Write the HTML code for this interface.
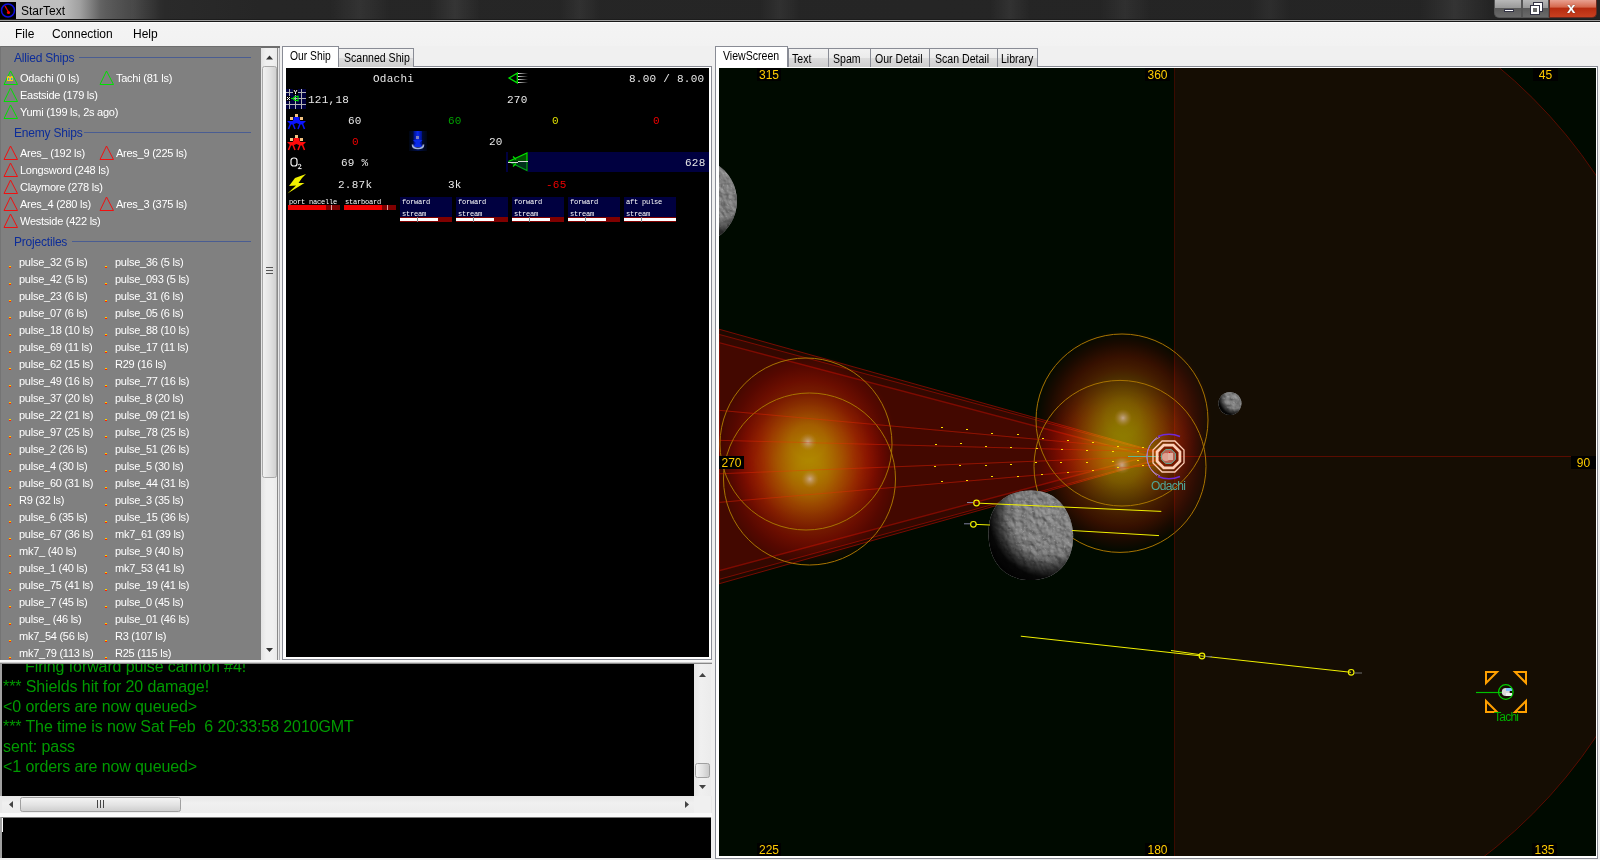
<!DOCTYPE html><html><head><meta charset="utf-8"><style>
*{box-sizing:border-box;margin:0;padding:0}
html,body{width:1600px;height:860px;overflow:hidden;background:#f0f0f0;font-family:"Liberation Sans",sans-serif;position:relative}
.a{position:absolute}
.mono{font-family:"Liberation Mono",monospace}
#title{left:0;top:0;width:1600px;height:22px;background:linear-gradient(#242424,#242424 19px,#1c1c1c 19px,#1c1c1c 20px,#a0a0a0 20px,#a0a0a0 21px,#181818 21px);overflow:hidden}
#menu{left:0;top:22px;width:1600px;height:24px;background:linear-gradient(#fdfdfd 0,#fdfdfd 1px,#f4f4f4 1px,#f2f2f2 100%);font-size:12px;color:#000}
#menu span{position:absolute;top:5px}
#list{left:0;top:46px;width:261px;height:614px;background:#808080;overflow:hidden;font-size:11px;color:#fff;letter-spacing:-0.25px}
.hd{position:absolute;color:#0c2c98;font-size:12px;letter-spacing:-0.2px;line-height:14px}
.hl{position:absolute;height:1px;background:#4a5d92}
.it{position:absolute;white-space:nowrap;line-height:13px}
.tri{position:absolute}
.pd{position:absolute;width:2px;height:2px;background:#ff2000;border-top:1px solid #ffd000}
.sb{position:absolute;background:#eaeaea}
.tab{position:absolute;font-size:12px;color:#000;white-space:nowrap;line-height:14px}
.tabu{background:linear-gradient(#f2f2f2,#ebebeb 50%,#dcdcdc 51%,#cfcfcf);border:1px solid #898c95;border-bottom:none}
.tabs{background:#fff;border:1px solid #898c95;border-bottom:none}
.ost{position:absolute;font-family:"Liberation Mono",monospace;font-size:11px;color:#e8e8e8;white-space:pre;line-height:12px}
.z{font-family:"Liberation Sans",sans-serif;font-size:12px;display:inline-block;width:6.85px;text-align:center;letter-spacing:0}
.wl{position:absolute;font-family:"Liberation Mono",monospace;font-size:7px;color:#fff;white-space:pre;line-height:7px;letter-spacing:-0.2px}
#log{left:0;top:664px;width:694px;height:132px;background:#000;border-left:2px solid #a0a0a0;overflow:hidden;color:#009a00;font-size:16px}
#hs{left:0;top:796px;width:712px;height:17px;background:#eaeaea}
#inp{left:0;top:816px;width:711px;height:42px;background:#000;border-left:2px solid #a0a0a0;border-top:2px solid #7a7a7a}
#log div{position:absolute;left:1px;white-space:pre;line-height:20px;letter-spacing:-0.1px}
.lbl{position:absolute;background:#000;color:#ffcc00;font-size:12px;line-height:14px;height:13px;text-align:center;padding-top:0;overflow:hidden}
</style></head><body>
<div id="title" class="a">
<div class="a" style="left:0;top:0;width:1600px;height:19px;background:linear-gradient(90deg,#c0c0c0 0,#bebebe 62px,#a0a0a0 80px,#646464 100px,#3c3c3c 130px,#2a2a2a 165px,#262626 260px,#242424 100%)"></div>
<div class="a" style="left:0;top:0;width:1600px;height:19px;background:linear-gradient(90deg,transparent 0,transparent 105px,rgba(255,255,255,0.08) 132px,transparent 160px,transparent 330px,rgba(255,255,255,0.06) 360px,transparent 390px,transparent 430px,rgba(255,255,255,0.07) 455px,transparent 480px,transparent 560px,rgba(255,255,255,0.05) 580px,transparent 600px,transparent 760px,rgba(255,255,255,0.05) 780px,transparent 800px,transparent 990px,rgba(255,255,255,0.06) 1010px,transparent 1030px,transparent 1100px,rgba(255,255,255,0.05) 1125px,transparent 1150px,transparent 1250px,rgba(255,255,255,0.04) 1270px,transparent 1290px,transparent 1420px,rgba(255,255,255,0.07) 1455px,transparent 1490px)"></div>
<svg class="a" style="left:0;top:2px" width="16" height="17"><rect x="0" y="0" width="16" height="17" fill="#000"/><circle cx="8" cy="8.5" r="6.5" fill="none" stroke="#1010e0" stroke-width="1.5"/><line x1="5" y1="4" x2="8.5" y2="10" stroke="#e00" stroke-width="1.3"/><circle cx="8.5" cy="10.5" r="1.6" fill="#f00"/></svg>
<div class="a" style="left:21px;top:4px;font-size:12px;color:#000;line-height:15px">StarText</div>
<div class="a" style="left:1494px;top:0;width:28px;height:18px;border:1px solid #555;border-top:none;border-radius:0 0 0 5px;background:linear-gradient(#b8b8b8 0,#9a9a9a 45%,#5a5a5a 50%,#6a6a6a 100%)"><div class="a" style="left:9px;top:9px;width:10px;height:3px;background:#fff;border:1px solid #334"></div></div>
<div class="a" style="left:1522px;top:0;width:27px;height:18px;border:1px solid #555;border-top:none;background:linear-gradient(#b8b8b8 0,#9a9a9a 45%,#5a5a5a 50%,#6a6a6a 100%)"><div class="a" style="left:11px;top:3px;width:8px;height:8px;border:2px solid #fff;outline:1px solid #334"></div><div class="a" style="left:8px;top:6px;width:8px;height:8px;border:2px solid #fff;background:#6a6a6a;outline:1px solid #334"></div></div>
<div class="a" style="left:1549px;top:0;width:48px;height:18px;border:1px solid #6a2a20;border-top:none;border-radius:0 0 5px 0;background:linear-gradient(#e8a090 0,#d66a50 40%,#b82c10 50%,#c84020 100%)"><div class="a" style="left:17px;top:0px;font-size:15px;font-weight:bold;color:#fff;line-height:16px;text-shadow:0 0 1px #333">x</div></div>
</div>
<div id="menu" class="a"><span style="left:15px">File</span><span style="left:52px">Connection</span><span style="left:133px">Help</span></div>
<div id="list" class="a">
<div class="a" style="left:0;top:0;width:261px;height:1px;background:#6e6e6e"></div>
<div class="a" style="left:0;top:0;width:1px;height:614px;background:#747474"></div>
<div class="hd" style="left:14px;top:5px">Allied Ships</div>
<div class="hl" style="left:79px;top:11px;width:172px"></div>
<svg class="tri" style="left:3px;top:24px" width="16" height="16"><path d="M7.5 1 L1 14.5 L14.5 14.5 Z" fill="none" stroke="#00e000" stroke-width="1"/><rect x="4" y="6.8" width="6" height="4.2" fill="#ffcc10"/><rect x="4.6" y="6" width="1.6" height="1" fill="#ffcc10"/><rect x="7.8" y="6" width="1.6" height="1" fill="#ffcc10"/><rect x="5" y="7.8" width="1.2" height="2.2" rx=".5" fill="#2890f0"/><rect x="8" y="7.8" width="1.2" height="2.2" rx=".5" fill="#2890f0"/></svg>
<div class="it" style="left:20px;top:25.5px">Odachi (0 ls)</div>
<svg class="tri" style="left:99px;top:24px" width="16" height="16"><path d="M7.5 1 L1 14.5 L14.5 14.5 Z" fill="none" stroke="#00e000" stroke-width="1"/></svg>
<div class="it" style="left:116px;top:25.5px">Tachi (81 ls)</div>
<svg class="tri" style="left:3px;top:41px" width="16" height="16"><path d="M7.5 1 L1 14.5 L14.5 14.5 Z" fill="none" stroke="#00e000" stroke-width="1"/></svg>
<div class="it" style="left:20px;top:42.5px">Eastside (179 ls)</div>
<svg class="tri" style="left:3px;top:58px" width="16" height="16"><path d="M7.5 1 L1 14.5 L14.5 14.5 Z" fill="none" stroke="#00e000" stroke-width="1"/></svg>
<div class="it" style="left:20px;top:59.5px">Yumi (199 ls, 2s ago)</div>
<div class="hd" style="left:14px;top:80px">Enemy Ships</div>
<div class="hl" style="left:84px;top:86px;width:167px"></div>
<svg class="tri" style="left:3px;top:99px" width="16" height="16"><path d="M7.5 1 L1 14.5 L14.5 14.5 Z" fill="none" stroke="#f01010" stroke-width="1"/></svg>
<div class="it" style="left:20px;top:100.5px">Ares_ (192 ls)</div>
<svg class="tri" style="left:99px;top:99px" width="16" height="16"><path d="M7.5 1 L1 14.5 L14.5 14.5 Z" fill="none" stroke="#f01010" stroke-width="1"/></svg>
<div class="it" style="left:116px;top:100.5px">Ares_9 (225 ls)</div>
<svg class="tri" style="left:3px;top:116px" width="16" height="16"><path d="M7.5 1 L1 14.5 L14.5 14.5 Z" fill="none" stroke="#f01010" stroke-width="1"/></svg>
<div class="it" style="left:20px;top:117.5px">Longsword (248 ls)</div>
<svg class="tri" style="left:3px;top:133px" width="16" height="16"><path d="M7.5 1 L1 14.5 L14.5 14.5 Z" fill="none" stroke="#f01010" stroke-width="1"/></svg>
<div class="it" style="left:20px;top:134.5px">Claymore (278 ls)</div>
<svg class="tri" style="left:3px;top:150px" width="16" height="16"><path d="M7.5 1 L1 14.5 L14.5 14.5 Z" fill="none" stroke="#f01010" stroke-width="1"/></svg>
<div class="it" style="left:20px;top:151.5px">Ares_4 (280 ls)</div>
<svg class="tri" style="left:99px;top:150px" width="16" height="16"><path d="M7.5 1 L1 14.5 L14.5 14.5 Z" fill="none" stroke="#f01010" stroke-width="1"/></svg>
<div class="it" style="left:116px;top:151.5px">Ares_3 (375 ls)</div>
<svg class="tri" style="left:3px;top:167px" width="16" height="16"><path d="M7.5 1 L1 14.5 L14.5 14.5 Z" fill="none" stroke="#f01010" stroke-width="1"/></svg>
<div class="it" style="left:20px;top:168.5px">Westside (422 ls)</div>
<div class="hd" style="left:14px;top:189px">Projectiles</div>
<div class="hl" style="left:72px;top:195px;width:179px"></div>
<div class="pd" style="left:9px;top:220px"></div>
<div class="it" style="left:19px;top:209.5px">pulse_32 (5 ls)</div>
<div class="pd" style="left:105px;top:220px"></div>
<div class="it" style="left:115px;top:209.5px">pulse_36 (5 ls)</div>
<div class="pd" style="left:9px;top:237px"></div>
<div class="it" style="left:19px;top:226.5px">pulse_42 (5 ls)</div>
<div class="pd" style="left:105px;top:237px"></div>
<div class="it" style="left:115px;top:226.5px">pulse_093 (5 ls)</div>
<div class="pd" style="left:9px;top:254px"></div>
<div class="it" style="left:19px;top:243.5px">pulse_23 (6 ls)</div>
<div class="pd" style="left:105px;top:254px"></div>
<div class="it" style="left:115px;top:243.5px">pulse_31 (6 ls)</div>
<div class="pd" style="left:9px;top:271px"></div>
<div class="it" style="left:19px;top:260.5px">pulse_07 (6 ls)</div>
<div class="pd" style="left:105px;top:271px"></div>
<div class="it" style="left:115px;top:260.5px">pulse_05 (6 ls)</div>
<div class="pd" style="left:9px;top:288px"></div>
<div class="it" style="left:19px;top:277.5px">pulse_18 (10 ls)</div>
<div class="pd" style="left:105px;top:288px"></div>
<div class="it" style="left:115px;top:277.5px">pulse_88 (10 ls)</div>
<div class="pd" style="left:9px;top:305px"></div>
<div class="it" style="left:19px;top:294.5px">pulse_69 (11 ls)</div>
<div class="pd" style="left:105px;top:305px"></div>
<div class="it" style="left:115px;top:294.5px">pulse_17 (11 ls)</div>
<div class="pd" style="left:9px;top:322px"></div>
<div class="it" style="left:19px;top:311.5px">pulse_62 (15 ls)</div>
<div class="pd" style="left:105px;top:322px"></div>
<div class="it" style="left:115px;top:311.5px">R29 (16 ls)</div>
<div class="pd" style="left:9px;top:339px"></div>
<div class="it" style="left:19px;top:328.5px">pulse_49 (16 ls)</div>
<div class="pd" style="left:105px;top:339px"></div>
<div class="it" style="left:115px;top:328.5px">pulse_77 (16 ls)</div>
<div class="pd" style="left:9px;top:356px"></div>
<div class="it" style="left:19px;top:345.5px">pulse_37 (20 ls)</div>
<div class="pd" style="left:105px;top:356px"></div>
<div class="it" style="left:115px;top:345.5px">pulse_8 (20 ls)</div>
<div class="pd" style="left:9px;top:373px"></div>
<div class="it" style="left:19px;top:362.5px">pulse_22 (21 ls)</div>
<div class="pd" style="left:105px;top:373px"></div>
<div class="it" style="left:115px;top:362.5px">pulse_09 (21 ls)</div>
<div class="pd" style="left:9px;top:390px"></div>
<div class="it" style="left:19px;top:379.5px">pulse_97 (25 ls)</div>
<div class="pd" style="left:105px;top:390px"></div>
<div class="it" style="left:115px;top:379.5px">pulse_78 (25 ls)</div>
<div class="pd" style="left:9px;top:407px"></div>
<div class="it" style="left:19px;top:396.5px">pulse_2 (26 ls)</div>
<div class="pd" style="left:105px;top:407px"></div>
<div class="it" style="left:115px;top:396.5px">pulse_51 (26 ls)</div>
<div class="pd" style="left:9px;top:424px"></div>
<div class="it" style="left:19px;top:413.5px">pulse_4 (30 ls)</div>
<div class="pd" style="left:105px;top:424px"></div>
<div class="it" style="left:115px;top:413.5px">pulse_5 (30 ls)</div>
<div class="pd" style="left:9px;top:441px"></div>
<div class="it" style="left:19px;top:430.5px">pulse_60 (31 ls)</div>
<div class="pd" style="left:105px;top:441px"></div>
<div class="it" style="left:115px;top:430.5px">pulse_44 (31 ls)</div>
<div class="pd" style="left:9px;top:458px"></div>
<div class="it" style="left:19px;top:447.5px">R9 (32 ls)</div>
<div class="pd" style="left:105px;top:458px"></div>
<div class="it" style="left:115px;top:447.5px">pulse_3 (35 ls)</div>
<div class="pd" style="left:9px;top:475px"></div>
<div class="it" style="left:19px;top:464.5px">pulse_6 (35 ls)</div>
<div class="pd" style="left:105px;top:475px"></div>
<div class="it" style="left:115px;top:464.5px">pulse_15 (36 ls)</div>
<div class="pd" style="left:9px;top:492px"></div>
<div class="it" style="left:19px;top:481.5px">pulse_67 (36 ls)</div>
<div class="pd" style="left:105px;top:492px"></div>
<div class="it" style="left:115px;top:481.5px">mk7_61 (39 ls)</div>
<div class="pd" style="left:9px;top:509px"></div>
<div class="it" style="left:19px;top:498.5px">mk7_ (40 ls)</div>
<div class="pd" style="left:105px;top:509px"></div>
<div class="it" style="left:115px;top:498.5px">pulse_9 (40 ls)</div>
<div class="pd" style="left:9px;top:526px"></div>
<div class="it" style="left:19px;top:515.5px">pulse_1 (40 ls)</div>
<div class="pd" style="left:105px;top:526px"></div>
<div class="it" style="left:115px;top:515.5px">mk7_53 (41 ls)</div>
<div class="pd" style="left:9px;top:543px"></div>
<div class="it" style="left:19px;top:532.5px">pulse_75 (41 ls)</div>
<div class="pd" style="left:105px;top:543px"></div>
<div class="it" style="left:115px;top:532.5px">pulse_19 (41 ls)</div>
<div class="pd" style="left:9px;top:560px"></div>
<div class="it" style="left:19px;top:549.5px">pulse_7 (45 ls)</div>
<div class="pd" style="left:105px;top:560px"></div>
<div class="it" style="left:115px;top:549.5px">pulse_0 (45 ls)</div>
<div class="pd" style="left:9px;top:577px"></div>
<div class="it" style="left:19px;top:566.5px">pulse_ (46 ls)</div>
<div class="pd" style="left:105px;top:577px"></div>
<div class="it" style="left:115px;top:566.5px">pulse_01 (46 ls)</div>
<div class="pd" style="left:9px;top:594px"></div>
<div class="it" style="left:19px;top:583.5px">mk7_54 (56 ls)</div>
<div class="pd" style="left:105px;top:594px"></div>
<div class="it" style="left:115px;top:583.5px">R3 (107 ls)</div>
<div class="pd" style="left:9px;top:611px"></div>
<div class="it" style="left:19px;top:600.5px">mk7_79 (113 ls)</div>
<div class="pd" style="left:105px;top:611px"></div>
<div class="it" style="left:115px;top:600.5px">R25 (115 ls)</div>
</div>
<div class="sb" style="left:261px;top:46px;width:17px;height:614px;background:linear-gradient(90deg,#e3e3e3,#f0f0f0 30%,#f0f0f0 70%,#e8e8e8)"></div>
<svg class="a" style="left:261px;top:46px" width="17" height="614"><path d="M5 13.5 L8.5 9.5 L12 13.5 Z" fill="#333"/><path d="M5 602 L8.5 606 L12 602 Z" fill="#333"/><rect x="1.5" y="20.5" width="14" height="411" rx="2" fill="url(#thg)" stroke="#a8a8a8"/><defs><linearGradient id="thg" x1="0" x2="1" y1="0" y2="0"><stop offset="0" stop-color="#f2f2f2"/><stop offset=".5" stop-color="#e4e4e4"/><stop offset="1" stop-color="#cfcfcf"/></linearGradient></defs><path d="M5 221.5 H12 M5 224.5 H12 M5 227.5 H12" stroke="#555" stroke-width="1"/></svg>
<div class="a" style="left:277px;top:46px;width:3px;height:614px;background:linear-gradient(90deg,#8a8a8a 0,#8a8a8a 1px,#e8e8e8 1px,#e8e8e8 2px,#b0b0b4 2px)"></div>
<div class="a" style="left:261px;top:46px;width:19px;height:2px;background:#6e6e6e"></div>
<div class="a" style="left:282px;top:66px;width:430px;height:594px;background:#fff;border:1px solid #898c95"></div>
<div class="tab tabu" style="left:338px;top:48px;width:76px;height:19px"><span class="a" style="left:5px;top:2px;transform:scaleX(.88);transform-origin:0 0">Scanned Ship</span></div>
<div class="tab tabs" style="left:282px;top:46px;width:57px;height:21px"><span class="a" style="left:7px;top:2px;transform:scaleX(.86);transform-origin:0 0">Our Ship</span></div>
<div class="a" style="left:286px;top:68px;width:423px;height:589px;background:#000;overflow:hidden" id="ship">
</div>
<div class="ost" style="left:373px;top:73px;color:#e8e8e8;letter-spacing:0.25px">Odachi</div>
<div class="ost" style="left:629px;top:73px;color:#e8e8e8;letter-spacing:0.25px">8.00 / 8.00</div>
<div class="ost" style="left:308px;top:94px;color:#e8e8e8;letter-spacing:0.25px">121,18</div>
<div class="ost" style="left:507px;top:94px;color:#e8e8e8;letter-spacing:0.25px">270</div>
<div class="ost" style="left:348px;top:115px;color:#e8e8e8;letter-spacing:0.25px">60</div>
<div class="ost" style="left:448px;top:115px;color:#00a000;letter-spacing:0.25px">60</div>
<div class="ost" style="left:552px;top:115px;color:#e0e000;letter-spacing:0.25px">0</div>
<div class="ost" style="left:653px;top:115px;color:#f00000;letter-spacing:0.25px">0</div>
<div class="ost" style="left:352px;top:136px;color:#f00000;letter-spacing:0.25px">0</div>
<div class="ost" style="left:489px;top:136px;color:#e8e8e8;letter-spacing:0.25px">20</div>
<div class="ost" style="left:341px;top:157px;color:#e8e8e8;letter-spacing:0.25px">69 %</div>
<div class="a" style="left:506px;top:152px;width:203px;height:20px;background:#000040"></div>
<div class="ost" style="left:685px;top:157px;color:#e8e8e8;letter-spacing:0.25px">628</div>
<div class="ost" style="left:338px;top:179px;color:#e8e8e8;letter-spacing:0.25px">2.87k</div>
<div class="ost" style="left:448px;top:179px;color:#e8e8e8;letter-spacing:0.25px">3k</div>
<div class="ost" style="left:546px;top:179px;color:#f00000;letter-spacing:0.25px">-65</div>
<svg class="a" style="left:507px;top:72px" width="22" height="12"><defs><linearGradient id="trl" x1="0" x2="1"><stop offset="0" stop-color="#fff"/><stop offset=".15" stop-color="#bbb"/><stop offset="1" stop-color="#000"/></linearGradient></defs><path d="M2 6 L10.3 1.2 V10.8 Z" fill="none" stroke="#00e000" stroke-width="1.3"/><path d="M11 1.5 H21 M11 4.5 H21 M11 7.5 H21 M11 10.5 H21" stroke="url(#trl)" stroke-width="1.1"/></svg>
<svg class="a" style="left:286px;top:89px" width="20" height="20"><rect width="20" height="20" fill="#000040"/><path d="M0 3.5 H20 M0 9.5 H20 M0 15.5 H20 M3.5 0 V20 M9.5 0 V20 M15.5 0 V20" stroke="#b4b4b4" stroke-width="1"/><rect x="7" y="0" width="5" height="6" fill="#000"/><rect x="0" y="7" width="5" height="5" fill="#000"/><path d="M8 1 L9.5 3.5 L11 1 M9.5 3.5 V5" stroke="#fff" stroke-width="1"/><path d="M1 8 L4 11 M4 8 L1 11" stroke="#fff" stroke-width="1"/><path d="M5 9.5 H7 L9 7.5 H11.5 M7 9.5 L9 11.5 H11.5 M12 6.5 V12.5" fill="none" stroke="#00e000" stroke-width="1.2"/></svg>
<svg class="a" style="left:287px;top:114px" width="20" height="16"><rect x="3" y="3" width="3" height="3" fill="#f0c080"/><rect x="8" y="0" width="3" height="3" fill="#f0c080"/><rect x="13" y="3" width="3" height="3" fill="#f0c080"/><path d="M6.5 6 H12.5 L13.5 7 H19 L15.5 10.5 L13 10.5 L9.5 9 L6 10.5 L3.5 10.5 L0 7 H5.5 Z" fill="#0a14ff"/><path d="M6.5 3 H12.5 V8 H6.5 Z" fill="#0a14ff"/><path d="M3.5 10 L1.5 15 M6 10 L8 15 M13 10 L11 15 M15.5 10 L17.5 15" stroke="#0a14ff" stroke-width="1.5"/></svg>
<svg class="a" style="left:287px;top:135px" width="20" height="16"><rect x="3" y="3" width="3" height="3" fill="#f0c080"/><rect x="8" y="0" width="3" height="3" fill="#f0c080"/><rect x="13" y="3" width="3" height="3" fill="#f0c080"/><path d="M6.5 6 H12.5 L13.5 7 H19 L15.5 10.5 L13 10.5 L9.5 9 L6 10.5 L3.5 10.5 L0 7 H5.5 Z" fill="#ff0a0a"/><path d="M6.5 3 H12.5 V8 H6.5 Z" fill="#ff0a0a"/><path d="M3.5 10 L1.5 15 M6 10 L8 15 M13 10 L11 15 M15.5 10 L17.5 15" stroke="#ff0a0a" stroke-width="1.5"/></svg>
<svg class="a" style="left:409px;top:131px" width="18" height="20"><defs><linearGradient id="bcn" x1="0" x2="1"><stop offset="0" stop-color="#000510"/><stop offset=".5" stop-color="#001050"/><stop offset="1" stop-color="#000510"/></linearGradient><linearGradient id="bcc" x1="0" x2="1"><stop offset="0" stop-color="#001080"/><stop offset=".5" stop-color="#0a2af0"/><stop offset="1" stop-color="#001080"/></linearGradient></defs><rect width="18" height="20" fill="url(#bcn)"/><rect x="4.5" y="0" width="8.5" height="16" fill="url(#bcc)"/><rect x="7" y="5" width="3" height="3" fill="#8080c0"/><path d="M4 9 H13.5 L10.5 12 L13.5 16 H4 L7 12 Z" fill="#0a2ae8"/><path d="M3.5 13.5 Q3.5 17.5 9 17.5 Q14.5 17.5 14.5 13.5" fill="none" stroke="#a0b0d8" stroke-width="1.7"/></svg>
<svg class="a" style="left:289px;top:156px" width="14" height="14"><rect x="2" y="2" width="6" height="8" rx="2.6" fill="none" stroke="#f4f4f4" stroke-width="1.2"/><path d="M9 9 Q10.5 7.6 12 9 Q12 10 9.2 12.6 H12.6" fill="none" stroke="#f4f4f4" stroke-width="1"/></svg>
<svg class="a" style="left:287px;top:174px" width="20" height="20"><path d="M19 0 L8 4 L2 12 L9 11.5 L0.5 19.5 L17.5 9 L11.5 9 L15 4 Z" fill="#f0f000"/></svg>
<svg class="a" style="left:508px;top:152px" width="20" height="20"><rect width="20" height="20" fill="#000"/><path d="M0.5 9.5 L19 1 V9.5 Z" fill="#005000"/><path d="M0.5 9.5 L19 18.5 V9.5 Z" fill="#00301a"/><path d="M0.5 9.5 L19 1 V9.5" fill="none" stroke="#00e000" stroke-width="1.2"/><path d="M0.5 9.5 L19 18.5 V9.5" fill="none" stroke="#00a018" stroke-width="1.2"/><path d="M5 4.5 L8 7.5 M5 14.5 L8 11.5" stroke="#00e000" stroke-width="1.2"/><path d="M0 10.5 H10 M10 9.5 H20" stroke="#d8d8d8" stroke-width="1"/></svg>
<div class="wl" style="left:289px;top:199px">port nacelle</div>
<div class="a" style="left:288px;top:205px;width:52px;height:5px;background:#800000"></div>
<div class="a" style="left:288px;top:205px;width:38px;height:5px;background:#f00000"></div>
<div class="a" style="left:331px;top:205px;width:1px;height:5px;background:#e0a0a0"></div>
<div class="wl" style="left:345px;top:199px">starboard</div>
<div class="a" style="left:344px;top:205px;width:52px;height:5px;background:#800000"></div>
<div class="a" style="left:344px;top:205px;width:38px;height:5px;background:#f00000"></div>
<div class="a" style="left:387px;top:205px;width:1px;height:5px;background:#e0a0a0"></div>
<div class="a" style="left:400px;top:197px;width:52px;height:25px;background:#000040"></div>
<div class="wl" style="left:402px;top:199px">forward</div>
<div class="wl" style="left:402px;top:211px">stream</div>
<div class="a" style="left:400px;top:217px;width:52px;height:5px;background:#800000"></div>
<div class="a" style="left:400px;top:218px;width:38px;height:3px;background:#fff"></div>
<div class="a" style="left:417px;top:217px;width:1px;height:5px;background:#808080"></div>
<div class="a" style="left:456px;top:197px;width:52px;height:25px;background:#000040"></div>
<div class="wl" style="left:458px;top:199px">forward</div>
<div class="wl" style="left:458px;top:211px">stream</div>
<div class="a" style="left:456px;top:217px;width:52px;height:5px;background:#800000"></div>
<div class="a" style="left:456px;top:218px;width:38px;height:3px;background:#fff"></div>
<div class="a" style="left:473px;top:217px;width:1px;height:5px;background:#808080"></div>
<div class="a" style="left:512px;top:197px;width:52px;height:25px;background:#000040"></div>
<div class="wl" style="left:514px;top:199px">forward</div>
<div class="wl" style="left:514px;top:211px">stream</div>
<div class="a" style="left:512px;top:217px;width:52px;height:5px;background:#800000"></div>
<div class="a" style="left:512px;top:218px;width:38px;height:3px;background:#fff"></div>
<div class="a" style="left:529px;top:217px;width:1px;height:5px;background:#808080"></div>
<div class="a" style="left:568px;top:197px;width:52px;height:25px;background:#000040"></div>
<div class="wl" style="left:570px;top:199px">forward</div>
<div class="wl" style="left:570px;top:211px">stream</div>
<div class="a" style="left:568px;top:217px;width:52px;height:5px;background:#800000"></div>
<div class="a" style="left:568px;top:218px;width:38px;height:3px;background:#fff"></div>
<div class="a" style="left:585px;top:217px;width:1px;height:5px;background:#808080"></div>
<div class="a" style="left:624px;top:197px;width:52px;height:25px;background:#000040"></div>
<div class="wl" style="left:626px;top:199px">aft pulse</div>
<div class="wl" style="left:626px;top:211px">stream</div>
<div class="a" style="left:624px;top:217px;width:52px;height:5px;background:#800000"></div>
<div class="a" style="left:624px;top:218px;width:52px;height:3px;background:#fff"></div>
<div class="a" style="left:641px;top:217px;width:1px;height:5px;background:#808080"></div>
<div class="a" style="left:0;top:660px;width:712px;height:4px;background:linear-gradient(#fafafa,#f4f4f4 50%,#a8a8a8 75%,#6a6a6a)"></div>
<div id="log" class="a">
<div style="top:-7px;left:23px">Firing forward pulse cannon #4!</div>
<div style="top:13px">*** Shields hit for 20 damage!</div>
<div style="top:33px">&lt;0 orders are now queued&gt;</div>
<div style="top:53px">*** The time is now Sat Feb &nbsp;6 20:33:58 2010GMT</div>
<div style="top:73px">sent: pass</div>
<div style="top:93px">&lt;1 orders are now queued&gt;</div>
</div>
<div id="hs" class="a"></div>
<div id="inp" class="a"></div>
<div class="a" style="left:694px;top:664px;width:17px;height:132px;background:linear-gradient(90deg,#e6e6e6,#f0f0f0 40%,#ececec)"></div>
<svg class="a" style="left:694px;top:664px" width="17" height="132"><path d="M5 13 L8.5 9 L12 13 Z" fill="#444"/><path d="M5 121 L8.5 125 L12 121 Z" fill="#444"/><rect x="1.5" y="99.5" width="14" height="14" rx="2" fill="url(#thg2)" stroke="#a0a0a0"/><defs><linearGradient id="thg2" x1="0" x2="1"><stop offset="0" stop-color="#f4f4f4"/><stop offset=".5" stop-color="#e2e2e2"/><stop offset="1" stop-color="#c8c8c8"/></linearGradient></defs></svg>
<div class="a" style="left:2px;top:796px;width:692px;height:17px;background:linear-gradient(#e6e6e6,#f0f0f0 40%,#ececec)"></div>
<div class="a" style="left:694px;top:796px;width:17px;height:17px;background:#f0f0f0"></div>
<svg class="a" style="left:2px;top:796px" width="692" height="17"><path d="M11 5 L7 8.5 L11 12 Z" fill="#444"/><path d="M683 5 L687 8.5 L683 12 Z" fill="#444"/><rect x="18.5" y="1.5" width="160" height="14" rx="2" fill="url(#thg3)" stroke="#a0a0a0"/><defs><linearGradient id="thg3" x1="0" x2="0" y1="0" y2="1"><stop offset="0" stop-color="#f4f4f4"/><stop offset=".5" stop-color="#e4e4e4"/><stop offset="1" stop-color="#cdcdcd"/></linearGradient></defs><path d="M95.5 4 V12 M98.5 4 V12 M101.5 4 V12" stroke="#444"/></svg>
<div class="a" style="left:0;top:813px;width:712px;height:4px;background:#fafafa"></div>
<div class="a" style="left:2px;top:818px;width:1px;height:14px;background:#fff"></div>
<div class="a" style="left:715px;top:66px;width:883px;height:793px;background:#fff;border:1px solid #898c95"></div>
<div class="tab tabu" style="left:788px;top:48px;width:41px;height:19px"><span class="a" style="left:3px;top:3px;transform:scaleX(.88);transform-origin:0 0">Text</span></div>
<div class="tab tabu" style="left:828px;top:48px;width:43px;height:19px"><span class="a" style="left:4px;top:3px;transform:scaleX(.88);transform-origin:0 0">Spam</span></div>
<div class="tab tabu" style="left:870px;top:48px;width:60px;height:19px"><span class="a" style="left:4px;top:3px;transform:scaleX(.88);transform-origin:0 0">Our Detail</span></div>
<div class="tab tabu" style="left:929px;top:48px;width:69px;height:19px"><span class="a" style="left:5px;top:3px;transform:scaleX(.88);transform-origin:0 0">Scan Detail</span></div>
<div class="tab tabu" style="left:997px;top:48px;width:41px;height:19px"><span class="a" style="left:3px;top:3px;transform:scaleX(.88);transform-origin:0 0">Library</span></div>
<div class="tab tabs" style="left:715px;top:46px;width:73px;height:21px"><span class="a" style="left:7px;top:2px;transform:scaleX(.88);transform-origin:0 0">ViewScreen</span></div>
<svg class="a" style="left:719px;top:68px" width="877" height="788" viewBox="719 68 877 788">
<defs>
<radialGradient id="glow" cx=".5" cy=".5" r=".5"><stop offset="0" stop-color="rgb(93,92,0)"/><stop offset=".2" stop-color="rgb(89,78,0)"/><stop offset=".375" stop-color="rgb(80,50,0)"/><stop offset=".55" stop-color="rgb(70,22,0)"/><stop offset=".7" stop-color="rgb(54,6,0)"/><stop offset=".85" stop-color="rgb(26,0,0)"/><stop offset="1" stop-color="rgb(0,0,0)"/></radialGradient>
<radialGradient id="hl" cx=".5" cy=".5" r=".5"><stop offset="0" stop-color="#d8b8b8" stop-opacity=".75"/><stop offset=".5" stop-color="#c8a090" stop-opacity=".35"/><stop offset="1" stop-color="#c08040" stop-opacity="0"/></radialGradient>
<radialGradient id="ashade" cx=".7" cy=".28" r=".8" fx=".72" fy=".25"><stop offset="0" stop-color="#000" stop-opacity="0"/><stop offset=".55" stop-color="#000" stop-opacity=".08"/><stop offset=".72" stop-color="#000" stop-opacity=".6"/><stop offset=".85" stop-color="#000" stop-opacity=".95"/><stop offset="1" stop-color="#000" stop-opacity="1"/></radialGradient>
<filter id="rock" x="0" y="0" width="100%" height="100%" color-interpolation-filters="sRGB"><feTurbulence type="fractalNoise" baseFrequency=".16" numOctaves="4" seed="5" result="t"/><feDiffuseLighting in="t" surfaceScale="1.3" diffuseConstant="1.1" lighting-color="#fff" result="l"><feDistantLight azimuth="-45" elevation="50"/></feDiffuseLighting><feColorMatrix in="l" type="matrix" values="0.6 0 0 0 0.02  0.6 0 0 0 0.02  0.6 0 0 0 0.02  0 0 0 0 1"/></filter>
<filter id="rock2" x="0" y="0" width="100%" height="100%" color-interpolation-filters="sRGB"><feTurbulence type="fractalNoise" baseFrequency=".45" numOctaves="2" seed="3"/><feColorMatrix type="matrix" values="0 0 0 0 1  0 0 0 0 1  0 0 0 0 1  2.4 0 0 0 -1.5"/></filter>
</defs>
<rect x="719" y="68" width="877" height="788" fill="#000a00"/>
<path d="M1175 -50 A506 506 0 0 1 1175 962 Z" fill="#150d03"/><path d="M1175 -50 A506 506 0 0 1 1175 962" fill="none" stroke="#5a0c00" stroke-width="1"/>
<path d="M1174.5 68 V856" stroke="#3a0a00" stroke-width="1"/>
<path d="M1174 456.5 H1596" stroke="#5a0c00" stroke-width="1"/>
<path d="M1172 456 L719 329.2 L719 583.8 Z" fill="#7a0800" fill-opacity=".24" stroke="#8a0c00" stroke-opacity=".85" stroke-width="1"/>
<path d="M1170 456 L719 334.4 L719 579.4 Z" fill="#7a0800" fill-opacity=".24" stroke="#8a0c00" stroke-opacity=".85" stroke-width="1"/>
<path d="M1149 456 L719 342.6 L719 570.7 Z" fill="#7a0800" fill-opacity=".24" stroke="#8a0c00" stroke-opacity=".85" stroke-width="1.4"/>
<path d="M1166 451 L719 410.3" stroke="#7a0e00" stroke-width="1"/>
<path d="M1166 452 L719 440.3" stroke="#7a0e00" stroke-width="1"/>
<path d="M1166 456 L719 473.8" stroke="#7a0e00" stroke-width="1"/>
<path d="M1166 464 L719 502.4" stroke="#7a0e00" stroke-width="1"/>
<circle cx="808" cy="442" r="88" fill="url(#glow)" style="mix-blend-mode:screen"/>
<circle cx="810" cy="479" r="88" fill="url(#glow)" style="mix-blend-mode:screen"/>
<circle cx="1123" cy="418" r="88" fill="url(#glow)" style="mix-blend-mode:screen"/>
<circle cx="1122" cy="465" r="88" fill="url(#glow)" style="mix-blend-mode:screen"/>
<circle cx="808" cy="442" r="9" fill="url(#hl)"/>
<circle cx="810" cy="479" r="9" fill="url(#hl)"/>
<circle cx="1123" cy="418" r="9" fill="url(#hl)"/>
<circle cx="1122" cy="465" r="9" fill="url(#hl)"/>
<circle cx="806" cy="444" r="86" fill="none" stroke="#a87400" stroke-width="1"/>
<circle cx="809.5" cy="479" r="86" fill="none" stroke="#a87400" stroke-width="1"/>
<circle cx="1122" cy="420" r="86" fill="none" stroke="#a87400" stroke-width="1"/>
<circle cx="1120" cy="466.4" r="86" fill="none" stroke="#a87400" stroke-width="1"/>
<path d="M1166 451 L719 410.3" stroke="#c02000" stroke-opacity=".3" stroke-width="1"/>
<path d="M1166 452 L719 440.3" stroke="#c02000" stroke-opacity=".3" stroke-width="1"/>
<path d="M1166 456 L719 473.8" stroke="#c02000" stroke-opacity=".3" stroke-width="1"/>
<path d="M1166 464 L719 502.4" stroke="#c02000" stroke-opacity=".3" stroke-width="1"/>
<rect x="941" y="427" width="2" height="1" fill="#ffe000"/>
<rect x="966" y="429" width="2" height="1" fill="#ffe000"/>
<rect x="991" y="433" width="2" height="1" fill="#ffe000"/>
<rect x="1017" y="434" width="2" height="1" fill="#ffe000"/>
<rect x="1042" y="438" width="2" height="1" fill="#ffe000"/>
<rect x="1067" y="440" width="2" height="1" fill="#ffe000"/>
<rect x="1092" y="442" width="2" height="1" fill="#ffe000"/>
<rect x="1117" y="446" width="2" height="1" fill="#ffe000"/>
<rect x="1142" y="447" width="2" height="1" fill="#ffe000"/>
<rect x="935" y="444" width="2" height="1" fill="#ffe000"/>
<rect x="960" y="443" width="2" height="1" fill="#ffe000"/>
<rect x="985" y="446" width="2" height="1" fill="#ffe000"/>
<rect x="1010" y="447" width="2" height="1" fill="#ffe000"/>
<rect x="1036" y="448" width="2" height="1" fill="#ffe000"/>
<rect x="1061" y="449" width="2" height="1" fill="#ffe000"/>
<rect x="1086" y="450" width="2" height="1" fill="#ffe000"/>
<rect x="1112" y="451" width="2" height="1" fill="#ffe000"/>
<rect x="1137" y="451" width="2" height="1" fill="#ffe000"/>
<rect x="934" y="466" width="2" height="1" fill="#ffe000"/>
<rect x="959" y="465" width="2" height="1" fill="#ffe000"/>
<rect x="985" y="465" width="2" height="1" fill="#ffe000"/>
<rect x="1010" y="464" width="2" height="1" fill="#ffe000"/>
<rect x="1035" y="462" width="2" height="1" fill="#ffe000"/>
<rect x="1060" y="462" width="2" height="1" fill="#ffe000"/>
<rect x="1086" y="462" width="2" height="1" fill="#ffe000"/>
<rect x="1112" y="461" width="2" height="1" fill="#ffe000"/>
<rect x="1137" y="460" width="2" height="1" fill="#ffe000"/>
<rect x="941" y="481" width="2" height="1" fill="#ffe000"/>
<rect x="966" y="480" width="2" height="1" fill="#ffe000"/>
<rect x="991" y="476" width="2" height="1" fill="#ffe000"/>
<rect x="1017" y="476" width="2" height="1" fill="#ffe000"/>
<rect x="1041" y="474" width="2" height="1" fill="#ffe000"/>
<rect x="1067" y="472" width="2" height="1" fill="#ffe000"/>
<rect x="1092" y="470" width="2" height="1" fill="#ffe000"/>
<rect x="1117" y="467" width="2" height="1" fill="#ffe000"/>
<rect x="1142" y="465" width="2" height="1" fill="#ffe000"/>
<clipPath id="a1"><path d="M1031 490.5 C1058 490 1071 512 1073 532 C1075 560 1058 580 1030 580 C1003 580 988 560 988.5 532 C989 505 1005 491 1031 490.5 Z"/></clipPath>
<g clip-path="url(#a1)"><rect x="987" y="489" width="88" height="93" fill="#868686"/><rect x="987" y="489" width="88" height="93" filter="url(#rock)" opacity=".85"/><rect x="987" y="489" width="88" height="93" filter="url(#rock2)" opacity=".45"/><rect x="987" y="489" width="88" height="93" fill="url(#ashade)"/></g>
<clipPath id="a2"><path d="M1230 392 A11.5 11.5 0 1 1 1229.9 392 Z"/></clipPath>
<g clip-path="url(#a2)"><rect x="1218" y="391" width="24" height="25" fill="#868686"/><rect x="1218" y="391" width="24" height="25" filter="url(#rock)" opacity=".85"/><rect x="1218" y="391" width="24" height="25" filter="url(#rock2)" opacity=".45"/><rect x="1218" y="391" width="24" height="25" fill="url(#ashade)"/></g>
<clipPath id="a3"><path d="M694 158 A43 43 0 1 1 693.9 158 Z"/></clipPath>
<g clip-path="url(#a3)"><rect x="651" y="157" width="87" height="88" fill="#868686"/><rect x="651" y="157" width="87" height="88" filter="url(#rock)" opacity=".85"/><rect x="651" y="157" width="87" height="88" filter="url(#rock2)" opacity=".45"/><rect x="651" y="157" width="87" height="88" fill="url(#ashade)"/></g>
<path d="M979 503.2 L1161.3 511.4" stroke="#f0f000" stroke-width="1"/>
<path d="M967 502.5 H973" stroke="#8080a0" stroke-width="1"/><circle cx="976.5" cy="503" r="2.8" fill="none" stroke="#f0f000" stroke-width="1.2"/>
<path d="M976 524.4 L990 525" stroke="#f0f000" stroke-width="1"/><path d="M1072 530.5 L1159 535.6" stroke="#f0f000" stroke-width="1"/>
<path d="M964 523.8 H970" stroke="#8080a0" stroke-width="1"/><circle cx="973.4" cy="524.3" r="2.8" fill="none" stroke="#f0f000" stroke-width="1.2"/>
<path d="M1020.8 636.2 L1351 672.3" stroke="#f0f000" stroke-width="1"/><path d="M1171 650.5 L1199 654.5" stroke="#f0f000" stroke-width="1"/>
<circle cx="1202" cy="656" r="2.8" fill="none" stroke="#f0f000" stroke-width="1.2"/><path d="M1205 656.5 H1212" stroke="#707070" stroke-width="1"/>
<circle cx="1351.2" cy="672.3" r="2.8" fill="none" stroke="#f0f000" stroke-width="1.2"/><path d="M1354 673 H1362" stroke="#707070" stroke-width="1"/>
<path d="M1128 456.5 H1162" stroke="#60b890" stroke-width="1"/>
<path d="M1157 437.5 A23 23 0 0 0 1157 475.5" fill="none" stroke="#c090c8" stroke-width="1"/><path d="M1160 437 A21 21 0 0 0 1160 476" fill="none" stroke="#a878c0" stroke-width="1"/>
<path d="M1158 436.5 Q1169 432 1180 436.5 M1158 476.5 Q1169 481 1180 476.5" fill="none" stroke="#7028d8" stroke-width="1.6"/>
<polygon points="1184.0,462.9 1174.9,472.0 1162.1,472.0 1153.0,462.9 1153.0,450.1 1162.1,441.0 1174.9,441.0 1184.0,450.1" fill="none" stroke="#ffd0b8" stroke-width="1.3"/>
<polygon points="1179.9,461.2 1173.2,467.9 1163.8,467.9 1157.1,461.2 1157.1,451.8 1163.8,445.1 1173.2,445.1 1179.9,451.8" fill="none" stroke="#ffd0b8" stroke-width="2.8"/>
<polygon points="1177.3,460.1 1172.1,465.3 1164.9,465.3 1159.7,460.1 1159.7,452.9 1164.9,447.7 1172.1,447.7 1177.3,452.9" fill="none" stroke="#7a1800" stroke-width="1.5"/>
<polygon points="1175.4,459.4 1171.4,463.4 1165.6,463.4 1161.6,459.4 1161.6,453.6 1165.6,449.6 1171.4,449.6 1175.4,453.6" fill="#b86050" stroke="#60b0a0" stroke-width="1"/>
<circle cx="1166" cy="457" r="4" fill="#e0a090"/><rect x="1168" y="453" width="5" height="7" fill="#e0b0a0"/><rect x="1169" y="452" width="1" height="1" fill="#f00"/>
<text x="1151" y="489.5" font-family="Liberation Sans" font-size="12" fill="#50a898" textLength="35">Odachi</text>
<path d="M1486 672 H1497 L1486 683 Z M1526 672 H1515 L1526 683 Z M1486 712 H1497 L1486 701 Z M1526 712 H1515 L1526 701 Z" fill="none" stroke="#ffa000" stroke-width="2"/>
<path d="M1476 692.5 H1504" stroke="#00c000" stroke-width="1.2"/>
<circle cx="1505.8" cy="692" r="4" fill="#d8d8d8"/><rect x="1506" y="688" width="6" height="3" fill="#80c0ff"/><rect x="1506" y="693" width="6" height="3" fill="#f0f0f0"/>
<circle cx="1505.8" cy="692" r="7.3" fill="none" stroke="#00d000" stroke-width="1.2"/>
<text x="1494" y="721" font-family="Liberation Sans" font-size="12" fill="#00b000" textLength="25">Tachi</text>
</svg>
<div class="lbl" style="left:757px;top:68px;width:24px">315</div>
<div class="lbl" style="left:1145px;top:68px;width:25px">360</div>
<div class="lbl" style="left:1533px;top:68px;width:25px">45</div>
<div class="lbl" style="left:719px;top:456px;width:25px">270</div>
<div class="lbl" style="left:1571px;top:456px;width:25px">90</div>
<div class="lbl" style="left:757px;top:843px;width:24px">225</div>
<div class="lbl" style="left:1145px;top:843px;width:25px">180</div>
<div class="lbl" style="left:1532px;top:843px;width:25px">135</div>
</body></html>
